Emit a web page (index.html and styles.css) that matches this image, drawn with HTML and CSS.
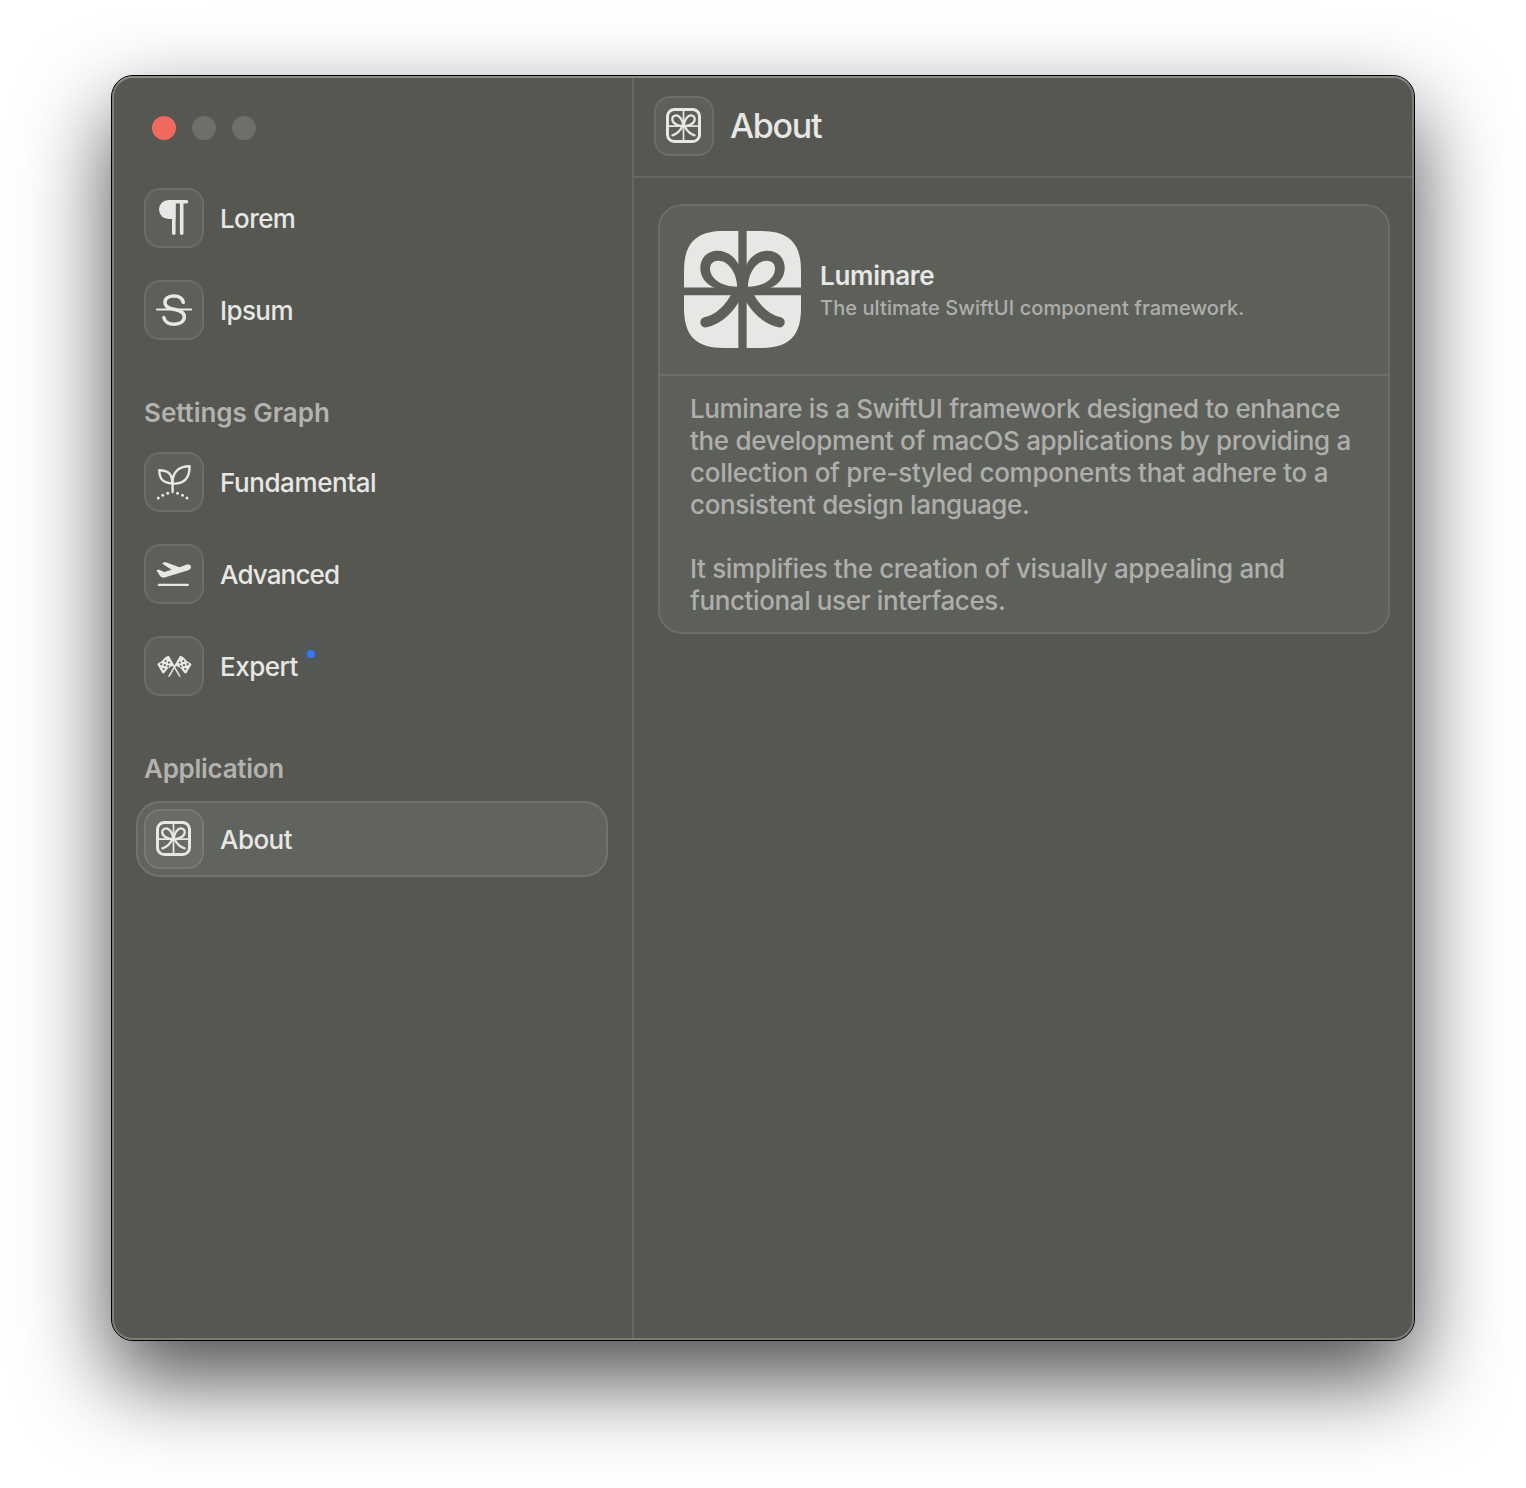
FILE: index.html
```html
<!DOCTYPE html>
<html lang="en">
<head>
<meta charset="utf-8">
<title>About</title>
<link rel="stylesheet" href="styles.css">
</head>
<body>
<svg class="defs" aria-hidden="true">
  <symbol id="bow" viewBox="0 0 117 117">
    <path d="M58.500 60.500C56 42 46 24.700 33.500 24.700C25.500 24.700 21 31 21 37.500C21 50 36 60.500 58.500 60.500C81 60.500 96 50 96 37.500C96 31 91.500 24.700 83.500 24.700C71 24.700 61 42 58.500 60.500M55 60C49 73 36 87 21.500 91.300M62 60C68 73 81 87 95.500 91.300" fill="none" stroke="currentColor" stroke-linecap="round" stroke-linejoin="round"/>
  </symbol>
  <symbol id="gift" viewBox="0 0 35 35">
    <rect x="1.500" y="1.500" width="32" height="32" rx="6.800" fill="none" stroke="currentColor" stroke-width="3"/>
    <path d="M17.500 2v31M2 18.100h31" stroke="currentColor" stroke-width="1.700"/>
    <use href="#bow" width="35" height="35" stroke-width="7.500"/>
  </symbol>
</svg>
<div class="window">
  <aside class="sidebar">
    <div class="lights"><i class="close"></i><i></i><i></i></div>
    <nav class="group">
      <a class="item"><span class="tile"><svg viewBox="0 0 60 60"><path d="M42.500 13.800H25.500M29.800 14V45.300M37.700 14V45.300" fill="none" stroke="currentColor" stroke-width="3.600" stroke-linecap="round"/><path d="M31.500 12H24.500A9.500 9.500 0 0 0 24.500 31H31.500Z" fill="currentColor"/></svg></span><span class="label lorem">Lorem</span></a>
      <a class="item"><span class="tile"><svg viewBox="0 0 60 60"><path d="M12.800 29.500H47.200" stroke="currentColor" stroke-width="1.800" stroke-linecap="round"/><path d="M39.300 22.300C38.300 18 34.800 15.900 30 15.900C24.700 15.900 20.900 18.500 20.900 22.500C20.900 26.200 23.800 27.900 28.600 29L32 29.800C37.200 31 40.300 33 40.300 36.800C40.300 41.300 36.200 44.200 30.300 44.200C24.700 44.200 20.900 41.800 19.800 37.600" fill="none" stroke="currentColor" stroke-width="3.500" stroke-linecap="round"/></svg></span><span class="label ipsum">Ipsum</span></a>
    </nav>
    <h2 class="sg">Settings Graph</h2>
    <nav class="group">
      <a class="item"><span class="tile"><svg viewBox="0 0 60 60"><path d="M28.600 40V30.500M28.300 31.500C19.500 31 15.200 27.500 15.300 18.300C24.500 18.500 28.300 22 28.300 31.500ZM28.500 31.500C28.500 20.500 34 14.200 45.600 14.200C45.600 26 40 32.500 28.500 31.500Z" fill="none" stroke="currentColor" stroke-width="2.400" stroke-linejoin="round" stroke-linecap="round"/><g fill="currentColor"><circle cx="14.300" cy="46" r="1.500"/><circle cx="18.700" cy="43.200" r="1.500"/><circle cx="23.700" cy="41.300" r="1.500"/><circle cx="33.500" cy="41.300" r="1.500"/><circle cx="38.500" cy="43.200" r="1.500"/><circle cx="43" cy="46" r="1.500"/></g></svg></span><span class="label fund">Fundamental</span></a>
      <a class="item"><span class="tile"><svg viewBox="0 0 60 60"><path d="M14.800 40.900H43.800" stroke="currentColor" stroke-width="2.200" stroke-linecap="round"/><path d="M12.400 26.400L14.600 25.600Q15.300 25.500 15.900 25.900L20.300 28L27.500 25.700L18 19.600L20.300 18.300Q21.100 18 21.800 18.200L35.500 23.300L41.500 21.100C44.500 20.100 46.900 20.600 47 22.900C46.900 24.800 45.500 25.900 43.500 26.500L20.500 33.500Q18 34 16.500 32.500Z" fill="currentColor"/></svg></span><span class="label adv">Advanced</span></a>
      <a class="item"><span class="tile"><svg viewBox="0 0 60 60"><g id="flag"><path d="M24.300 20.500L35.700 40.200" stroke="currentColor" stroke-width="1.500" stroke-linecap="round"/><path d="M24.300 20.300C21 19.800 19.500 24.300 16.500 26Q14.500 26.800 13.200 28.300L18.600 37.500C21 37.500 21.800 34.200 24.300 32.200Q27 30.900 29.500 29.600Z" fill="currentColor"/><g class="checks"><circle cx="21.500" cy="25" r="1.100"/><circle cx="17.200" cy="28.200" r="1.100"/><circle cx="20.800" cy="29.200" r="1.100"/><circle cx="25" cy="26.600" r="1.100"/><circle cx="24.200" cy="30.300" r="1.100"/><circle cx="19.600" cy="33" r="1.100"/></g></g><use href="#flag" transform="matrix(-1 0 0 1 60.800 0)"/></svg></span><span class="label exp">Expert<i class="dot"></i></span></a>
    </nav>
    <h2 class="app">Application</h2>
    <nav class="group">
      <a class="item selected"><span class="tile"><svg class="gift"><use href="#gift"/></svg></span><span class="label ab">About</span></a>
    </nav>
  </aside>
  <main>
    <header><span class="tile"><svg class="gift"><use href="#gift"/></svg></span><h1>About</h1></header>
    <section class="card">
      <div class="hero">
        <svg class="logo" viewBox="0 0 117 117"><path d="M0 40C0 12 12 0 40 0H77C105 0 117 12 117 40V77C117 105 105 117 77 117H40C12 117 0 105 0 77Z" fill="currentColor"/><path class="ribbon" d="M58.500 0V117" stroke-width="8.300"/><path class="ribbon" d="M0 60.300H117" stroke-width="7.700"/><g id="half"><path class="loop" d="M58.500 42L54.300 33C50 25 42.500 19.700 33.500 19.700C23 19.700 16.300 27.500 16.300 37C16.300 46 22 53.500 32 57.500L58.500 61Z"/><path d="M53 55.700C53 43 45 29.700 34.300 29.700C29 29.700 26 33 26 37.500C26 48 38 55.700 53 55.700Z" fill="currentColor"/><path class="ribbon" d="M54.500 61C47 76 36 88 21.500 91.300" fill="none" stroke-width="10.400" stroke-linecap="round"/></g><use href="#half" transform="matrix(-1 0 0 1 117 0)"/></svg>
        <div><h3>Luminare</h3><p class="tag">The ultimate SwiftUI component framework.</p></div>
      </div>
      <div class="body">
        <p><span class="l1">Luminare is a SwiftUI framework designed to enhance</span><br><span class="l2">the development of macOS applications by providing a</span><br><span class="l3">collection of pre-styled components that adhere to a</span><br><span class="l4">consistent design language.</span></p>
        <p><span class="l5">It simplifies the creation of visually appealing and</span><br><span class="l6">functional user interfaces.</span></p>
      </div>
    </section>
  </main>
</div>
</body>
</html>
```
FILE: styles.css
```css
* { box-sizing: border-box; }
body { margin: 0; padding: 75px 111px; width: 1526px; height: 1488px; background: #fff; overflow: hidden; font-family: Inter, "Liberation Sans", sans-serif; color: #e7e7e6; }
.defs { position: absolute; width: 0; height: 0; }
h1, h2, h3, p { margin: 0; }
.window { position: relative; display: flex; width: 1304px; height: 1266px; padding: 1px; border-radius: 22px; border: 1px solid #000; background: #555750; box-shadow: 0 38px 88px rgba(0,0,0,.7); }
.window::after { content: ""; position: absolute; inset: 0; border: 2px solid #7b7c78; border-top-color: #8c8d89; border-radius: 21px; pointer-events: none; }
.sidebar { flex: none; width: 521px; height: 1262px; border-right: 2px solid #656762; padding: 39px 24px 0 23px; }
.lights { display: flex; gap: 16px; padding-left: 16px; height: 24px; }
.lights i { width: 24px; height: 24px; border-radius: 50%; background: #6d6f6a; }
.lights .close { background: #ee6a5f; }
.group { display: flex; flex-direction: column; gap: 16px; margin-top: 40px; }
.item { display: flex; align-items: center; gap: 16px; height: 76px; padding: 0 8px; border-radius: 24px; }
.item.selected { background: #61635e; border: 2px solid #70726e; padding: 0 6px; }
.tile { display: flex; align-items: center; justify-content: center; flex: none; width: 60px; height: 60px; border: 2px solid #6b6d68; border-radius: 16px; background: #5d5f59; }
.selected .tile { background: #696b66; border-color: #777975; }
.tile svg { width: 60px; height: 60px; flex: none; }
.tile svg.gift { width: 35px; height: 35px; margin: 0 1px 1px 0; }
.checks { fill: #5d5f59; }
.label { position: relative; font-size: 26px; line-height: 32px; font-weight: 450; padding-top: 2px; white-space: nowrap; }
.lorem { letter-spacing: -.6px; }
.ipsum { letter-spacing: -.6px; }
.fund { letter-spacing: -.42px; }
.adv { letter-spacing: -.85px; }
.exp { letter-spacing: -.5px; }
.ab { letter-spacing: -.55px; }
.dot { position: absolute; left: 87px; top: 1px; width: 8px; height: 8px; border-radius: 50%; background: #3478f6; box-shadow: 0 0 16px rgba(52,120,246,.6); }
h2 { font-size: 26px; line-height: 32px; font-weight: 600; color: #b2b3b0; padding-left: 8px; white-space: nowrap; }
.sg, .app { margin-top: 49px; }
.sg { letter-spacing: -.03px; }
.app { letter-spacing: -.28px; }
.sg + .group { margin-top: 15px; }
.app + .group { margin-top: 16px; }
main { flex: 1; min-width: 0; }
header { display: flex; align-items: center; gap: 16px; height: 101px; padding: 0 20px 1px; border-bottom: 2px solid #656762; }
h1 { font-size: 34px; line-height: 40px; font-weight: 450; letter-spacing: -1.3px; white-space: nowrap; }
.card { margin: 26px 23px 0 24px; height: 430px; border: 2px solid #6b6d68; border-radius: 24px; background: #5d5f59; }
.hero { display: flex; align-items: center; gap: 19px; height: 170px; padding: 0 24px 2px; border-bottom: 2px solid #6b6d68; }
.logo { width: 117px; height: 117px; flex: none; }
.ribbon { stroke: #5d5f59; }
.loop { fill: #5d5f59; }
h3 { font-size: 26px; line-height: 32px; padding-top: 3px; font-weight: 600; letter-spacing: -.3px; white-space: nowrap; }
.tag { font-size: 20px; line-height: 28px; padding-top: 2px; font-weight: 500; letter-spacing: .08px; color: #aeafac; white-space: nowrap; }
.body { padding: 17px 30px; font-size: 26px; line-height: 32px; font-weight: 450; color: #aeafac; white-space: nowrap; }
.body p + p { margin-top: 32px; }
.l1 { letter-spacing: -.37px; }
.l2 { letter-spacing: -.33px; }
.l3 { letter-spacing: -.28px; }
.l4 { letter-spacing: -.37px; }
.l5 { letter-spacing: -.35px; }
.l6 { letter-spacing: -.39px; }
```
